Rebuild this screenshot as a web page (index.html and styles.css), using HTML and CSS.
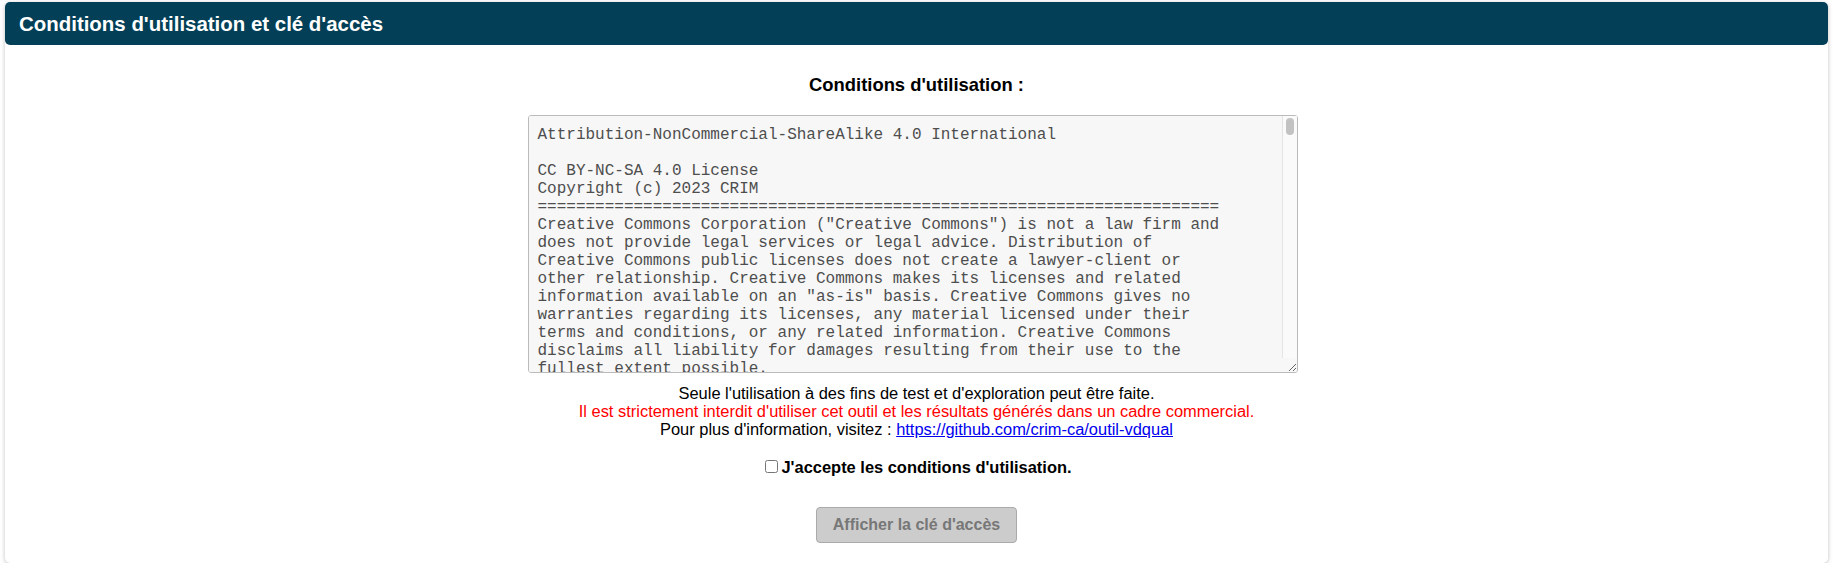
FILE: index.html
```html
<!DOCTYPE html>
<html lang="fr">
<head>
<meta charset="utf-8">
<title>Conditions d'utilisation et clé d'accès</title>
<link rel="stylesheet" href="styles.css">
</head>
<body>
<div class="card">
  <div class="card-header">Conditions d'utilisation et clé d'accès</div>
  <div class="card-body">
    <h3 class="terms-title">Conditions d'utilisation :</h3>
    <div class="license-wrap">
    <textarea class="license" readonly>
Attribution-NonCommercial-ShareAlike 4.0 International

CC BY-NC-SA 4.0 License
Copyright (c) 2023 CRIM
=======================================================================
Creative Commons Corporation ("Creative Commons") is not a law firm and
does not provide legal services or legal advice. Distribution of
Creative Commons public licenses does not create a lawyer-client or
other relationship. Creative Commons makes its licenses and related
information available on an "as-is" basis. Creative Commons gives no
warranties regarding its licenses, any material licensed under their
terms and conditions, or any related information. Creative Commons
disclaims all liability for damages resulting from their use to the
fullest extent possible.

Using Creative Commons Public Licenses

Creative Commons public licenses provide a standard set of terms and
conditions that creators and other rights holders may use to share
original works of authorship and other material subject to copyright
and certain other rights specified in the public license below. The
following considerations are for informational purposes only, are not
exhaustive, and do not form part of our licenses.

     Considerations for licensors: Our public licenses are
     intended for use by those authorized to give the public
     permission to use material in ways otherwise restricted by
     copyright and certain other rights. Our licenses are
     irrevocable. Licensors should read and understand the terms
     and conditions of the license they choose before applying it.
     Licensors should also secure all rights necessary before
     applying our licenses so that the public can reuse the
     material as expected. Licensors should clearly mark any
     material not subject to the license. This includes other CC-
     licensed material, or material used under an exception or
     limitation to copyright. More considerations for licensors:
     wiki.creativecommons.org/Considerations_for_licensors

     Considerations for the public: By using one of our public
     licenses, a licensor grants the public permission to use the
     licensed material under specified terms and conditions. If
     the licensor's permission is not necessary for any reason--for
     example, because of any applicable exception or limitation to
     copyright--then that use is not regulated by the license. Our
     licenses grant only permissions under copyright and certain
     other rights that a licensor has authority to grant. Use of
     the licensed material may still be restricted for other
     reasons, including because others have copyright or other
     rights in the material. A licensor may make special requests,
     such as asking that all changes be marked or described.
     Although not required by our licenses, you are encouraged to
     respect those requests where reasonable. More considerations
     for the public:
     wiki.creativecommons.org/Considerations_for_licensees

=======================================================================

Creative Commons Attribution-NonCommercial-ShareAlike 4.0 International
Public License

By exercising the Licensed Rights (defined below), You accept and agree
to be bound by the terms and conditions of this Creative Commons
Attribution-NonCommercial-ShareAlike 4.0 International Public License
("Public License"). To the extent this Public License may be
interpreted as a contract, You are granted the Licensed Rights in
consideration of Your acceptance of these terms and conditions, and the
Licensor grants You such rights in consideration of benefits the
Licensor receives from making the Licensed Material available under
these terms and conditions.


Section 1 -- Definitions.

  a. Adapted Material means material subject to Copyright and Similar
     Rights that is derived from or based upon the Licensed Material
     and in which the Licensed Material is translated, altered,
     arranged, transformed, or otherwise modified in a manner requiring
     permission under the Copyright and Similar Rights held by the
     Licensor. For purposes of this Public License, where the Licensed
     Material is a musical work, performance, or sound recording,
     Adapted Material is always produced where the Licensed Material is
     synched in timed relation with a moving image.

  b. Adapter's License means the license You apply to Your Copyright
     and Similar Rights in Your contributions to Adapted Material in
     accordance with the terms and conditions of this Public License.

  c. BY-NC-SA Compatible License means a license listed at
     creativecommons.org/compatiblelicenses, approved by Creative
     Commons as essentially the equivalent of this Public License.

  d. Copyright and Similar Rights means copyright and/or similar rights
     closely related to copyright including, without limitation,
     performance, broadcast, sound recording, and Sui Generis Database
     Rights, without regard to how the rights are labeled or
     categorized. For purposes of this Public License, the rights
     specified in Section 2(b)(1)-(2) are not Copyright and Similar
     Rights.

  e. Effective Technological Measures means those measures that, in the
     absence of proper authority, may not be circumvented under laws
     fulfilling obligations under Article 11 of the WIPO Copyright
     Treaty adopted on December 20, 1996, and/or similar international
     agreements.

  f. Exceptions and Limitations means fair use, fair dealing, and/or
     any other exception or limitation to Copyright and Similar Rights
     that applies to Your use of the Licensed Material.

  g. License Elements means the license attributes listed in the name
     of a Creative Commons Public License. The License Elements of this
     Public License are Attribution, NonCommercial, and ShareAlike.

  h. Licensed Material means the artistic or literary work, database,
     or other material to which the Licensor applied this Public
     License.

  i. Licensed Rights means the rights granted to You subject to the
     terms and conditions of this Public License, which are limited to
     all Copyright and Similar Rights that apply to Your use of the
     Licensed Material and that the Licensor has authority to license.

  j. Licensor means the individual(s) or entity(ies) granting rights
     under this Public License.

  k. NonCommercial means not primarily intended for or directed towards
     commercial advantage or monetary compensation. For purposes of
     this Public License, the exchange of the Licensed Material for
     other material subject to Copyright and Similar Rights by digital
     file-sharing or similar means is NonCommercial provided there is
     no payment of monetary compensation in connection with the
     exchange.

  l. Share means to provide material to the public by any means or
     process that requires permission under the Licensed Rights, such
     as reproduction, public display, public performance, distribution,
     dissemination, communication, or importation, and to make material
     available to the public including in ways that members of the
     public may access the material from a place and at a time
     individually chosen by them.

  m. Sui Generis Database Rights means rights other than copyright
     resulting from Directive 96/9/EC of the European Parliament and of
     the Council of 11 March 1996 on the legal protection of databases,
     as amended and/or succeeded, as well as other essentially
     equivalent rights anywhere in the world.

  n. You means the individual or entity exercising the Licensed Rights
     under this Public License. Your has a corresponding meaning.


Section 2 -- Scope.

  a. License grant.

       1. Subject to the terms and conditions of this Public License,
          the Licensor hereby grants You a worldwide, royalty-free,
          non-sublicensable, non-exclusive, irrevocable license to
          exercise the Licensed Rights in the Licensed Material to:

            a. reproduce and Share the Licensed Material, in whole or
               in part, for NonCommercial purposes only; and

            b. produce, reproduce, and Share Adapted Material for
               NonCommercial purposes only.

       2. Exceptions and Limitations. For the avoidance of doubt, where
          Exceptions and Limitations apply to Your use, this Public
          License does not apply, and You do not need to comply with
          its terms and conditions.

       3. Term. The term of this Public License is specified in Section
          6(a).
</textarea>
    <div class="scroll-track" aria-hidden="true"><div class="scroll-thumb"></div></div>
    </div>
    <p class="notice">
      Seule l'utilisation à des fins de test et d'exploration peut être faite.<br>
      <span class="warn">Il est strictement interdit d'utiliser cet outil et les résultats générés dans un cadre commercial.</span><br>
      Pour plus d'information, visitez : <a href="https://github.com/crim-ca/outil-vdqual">https://github.com/crim-ca/outil-vdqual</a>
    </p>
    <label class="accept"><input type="checkbox" class="accept-box">J'accepte les conditions d'utilisation.</label>
    <button class="show-key" type="button" disabled>Afficher la clé d'accès</button>
  </div>
</div>
</body>
</html>
```

FILE: styles.css
```css
html, body {
  margin: 0;
  padding: 0;
  background: #ffffff;
}

body {
  font-family: "Liberation Sans", Arial, Helvetica, sans-serif;
  color: #000;
}

.card {
  margin: 2px 7px 0 5px;
  background: #ffffff;
  border-radius: 5px;
  box-shadow: 0 1px 4px rgba(0, 0, 0, 0.25);
}

.card-header {
  background: #034057;
  color: #ffffff;
  font-weight: bold;
  font-size: 20.45px;
  line-height: 24px;
  padding: 10px 14px 9px;
  border-radius: 5px;
}

.card-body {
  display: flex;
  flex-direction: column;
  align-items: center;
  padding: 0 0 20px;
}

.terms-title {
  font-size: 18.4px;
  font-weight: bold;
  line-height: normal;
  margin: 28.5px 0 19px;
}

.license-wrap {
  position: relative;
  display: flex;
  margin: 0 8px 0 0;
}

.license {
  box-sizing: border-box;
  width: 770px;
  height: 258px;
  margin: 0;
  padding: 10px 24px 10px 9px;
  border: 1px solid #bbbbbb;
  border-radius: 3px;
  background: #f7f7f7;
  color: #4e4e4e;
  font-family: "Liberation Mono", "Courier New", monospace;
  font-size: 16px;
  line-height: normal;
  resize: both;
  outline: none;
  overflow-y: scroll;
}

.scroll-track {
  position: absolute;
  top: 1px;
  right: 1px;
  bottom: 15px;
  width: 15px;
  box-sizing: border-box;
  background: #fafafa;
  border-left: 1px solid #e4e4e4;
  pointer-events: none;
}

.scroll-thumb {
  margin: 2px 0 0 3px;
  width: 8px;
  height: 17px;
  border-radius: 4px;
  background: #c2c2c2;
}

.notice {
  margin: 11px 0 0;
  text-align: center;
  font-size: 16.45px;
  line-height: 18.4px;
}

.warn {
  color: #ff0000;
}

.notice a {
  color: #0000ee;
  text-decoration: underline;
}

.accept {
  margin-top: 18px;
  font-size: 16.45px;
  font-weight: bold;
  line-height: 18.4px;
}

.accept-box {
  margin: 3px 3px 3px 4px;
}

.show-key {
  margin-top: 31px;
  padding: 8px 16px;
  font-family: "Liberation Sans", Arial, Helvetica, sans-serif;
  font-size: 16px;
  font-weight: bold;
  line-height: normal;
  color: #777777;
  background: #cccccc;
  border: 1px solid #aaaaaa;
  border-radius: 4px;
}
```
